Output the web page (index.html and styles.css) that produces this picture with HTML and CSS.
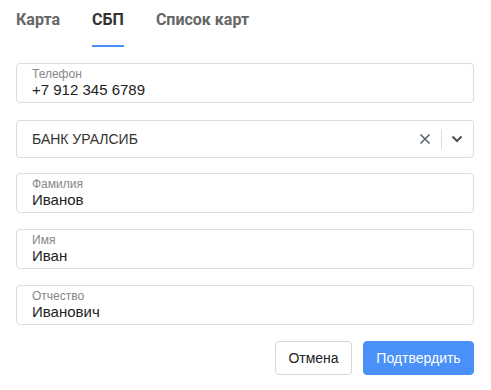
FILE: index.html
```html
<!DOCTYPE html>
<html lang="ru">
<head>
    <meta charset="UTF-8">
    <title>СБП</title>
    <link rel="stylesheet" href="styles.css">
</head>
<body>
    <div class="payout">
        <!-- вкладки -->
        <nav class="tabs">
            <span class="tab">Карта</span>
            <span class="tab active">СБП</span>
            <span class="tab">Список карт</span>
        </nav>

        <div class="form">
            <label class="field phone">
                <span class="field-label">Телефон</span>
                <span class="field-value">+7 912 345 6789</span>
            </label>

            <div class="select">
                <span class="select-value">БАНК УРАЛСИБ</span>
                <span class="select-clear">
                    <svg width="12" height="12" viewBox="0 0 12 12"><path d="M1.5 1.5l9 9M10.5 1.5l-9 9" stroke="#5b6470" stroke-width="1.6" fill="none"/></svg>
                </span>
                <span class="select-sep"></span>
                <span class="select-arrow">
                    <svg width="12" height="8" viewBox="0 0 12 8"><path d="M1.5 1.5l4.5 4.5 4.5-4.5" stroke="#555" stroke-width="2.2" fill="none"/></svg>
                </span>
            </div>

            <label class="field">
                <span class="field-label">Фамилия</span>
                <span class="field-value">Иванов</span>
            </label>
            <label class="field">
                <span class="field-label">Имя</span>
                <span class="field-value">Иван</span>
            </label>
            <label class="field">
                <span class="field-label">Отчество</span>
                <span class="field-value">Иванович</span>
            </label>
        </div>

        <div class="actions">
            <button class="btn btn-cancel">Отмена</button>
            <button class="btn btn-primary">Подтвердить</button>
        </div>
    </div>
</body>
</html>
```

FILE: styles.css
```css
html, body {
    margin: 0; padding: 0;
    background: #fff;
    font-family: "Liberation Sans", Arial, sans-serif;
}
.payout {
    padding: 10px 17px 0 16px;
    width: 491px; box-sizing: border-box;
}
/* ----- вкладки ----- */
.tabs {
    display: flex; gap: 32px;
    font-family: Roboto, "Liberation Sans", sans-serif;
}
.tab {
    font-size: 16px; font-weight: bold; line-height: 19px;
    color: #666;
    padding-bottom: 16px;
    border-bottom: 2px solid transparent;
}
.tab.active {
    color: #333;
    border-bottom-color: #4a8ff7;
}
/* ----- поля ----- */
.form {
    margin-top: 16px;
    display: flex; flex-direction: column; gap: 16px;
}
.field {
    display: flex; flex-direction: column;
    height: 40px; box-sizing: border-box;
    border: 1px solid #dcdcdc; border-radius: 4px;
    padding: 3px 15px 0;
}
.field.phone { margin-bottom: 1px; }
.field-label {
    font-size: 12px; line-height: 14px; color: #888;
}
.field-value {
    font-size: 15px; line-height: 18px; color: #222;
}
.select {
    display: flex; align-items: center;
    height: 38px; box-sizing: border-box;
    border: 1px solid #dcdcdc; border-radius: 4px;
    padding: 0 10px 0 15px;
    margin-bottom: -1px;
}
.select-value {
    flex: 1;
    font-size: 14px; color: #333;
}
.select-clear { display: flex; margin-right: 10px; }
.select-sep {
    width: 1px; height: 20px; background: #ddd;
    margin-right: 9px;
}
.select-arrow { display: flex; }
/* ----- кнопки ----- */
.actions {
    display: flex; justify-content: flex-end; gap: 11px;
    margin-top: 16px;
}
.btn {
    height: 34px; box-sizing: border-box;
    border-radius: 4px;
    font-family: inherit; font-size: 14px;
    cursor: pointer;
}
.btn-cancel {
    width: 77px;
    background: #fff; color: #222;
    border: 1px solid #d5d5d5;
}
.btn-primary {
    width: 111px;
    background: #4a90f9; color: #fff;
    border: 1px solid #4a90f9;
}
```
